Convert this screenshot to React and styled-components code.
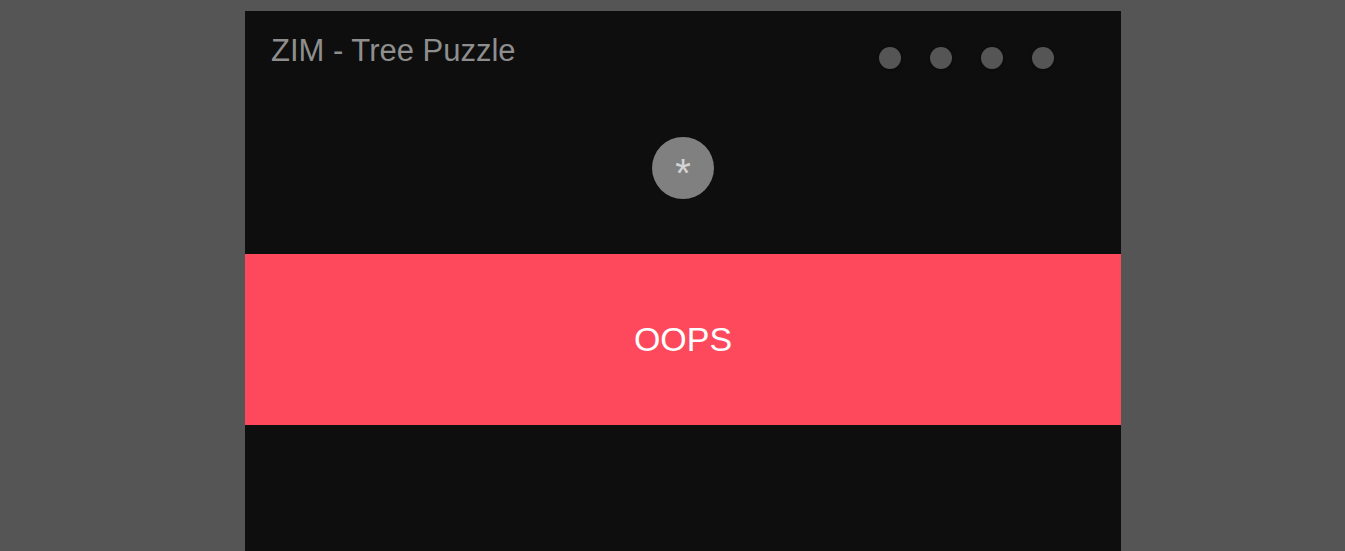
import React from "react";
import styled, { createGlobalStyle } from "styled-components";

const GlobalStyle = createGlobalStyle`
  html, body {
    margin: 0;
    padding: 0;
    background: #555555;
    overflow: hidden;
  }
  body {
    font-family: "Liberation Sans", Arial, sans-serif;
  }
`;

const Page = styled.div`
  display: flex;
  padding: 11px 0 0 245px;
  min-height: 551px;
  box-sizing: border-box;
`;

const Frame = styled.div`
  width: 876px;
  height: 620px;
  background: #0e0e0e;
  display: flex;
  flex-direction: column;
`;

const Header = styled.div`
  height: 80px;
  display: flex;
  justify-content: space-between;
  align-items: flex-start;
  padding: 0 67px 0 26px;
`;

const Title = styled.h1`
  margin: 24px 0 0;
  font-size: 31px;
  line-height: 31px;
  font-weight: normal;
  color: #8e8e8e;
`;

const Dots = styled.div`
  display: flex;
  gap: 29px;
  margin-top: 36px;
`;

const Dot = styled.span`
  width: 22px;
  height: 22px;
  border-radius: 50%;
  background: #555555;
  box-shadow: 0 1px 3px rgba(0, 0, 0, 0.35);
`;

const Center = styled.div`
  display: flex;
  justify-content: center;
  margin-top: 46px;
`;

const RoundButton = styled.div`
  width: 62px;
  height: 62px;
  border-radius: 50%;
  background: #808080;
  color: #d4d4d4;
  font-size: 40px;
  line-height: 1;
  display: flex;
  justify-content: center;
  align-items: center;
  padding-top: 10px;
  box-sizing: border-box;
`;

const Band = styled.div`
  margin-top: 55px;
  height: 171px;
  background: ${(p) => p.color};
  color: #ffffff;
  font-size: 34px;
  display: flex;
  justify-content: center;
  align-items: center;
`;

export default function App() {
  return (
    <>
      <GlobalStyle />
      <Page>
        <Frame>
          <Header>
            <Title>ZIM - Tree Puzzle</Title>
            <Dots>
              {[0, 1, 2, 3].map((i) => (
                <Dot key={i} />
              ))}
            </Dots>
          </Header>
          <Center>
            <RoundButton>*</RoundButton>
          </Center>
          <Band color="#fd495b">OOPS</Band>
        </Frame>
      </Page>
    </>
  );
}
